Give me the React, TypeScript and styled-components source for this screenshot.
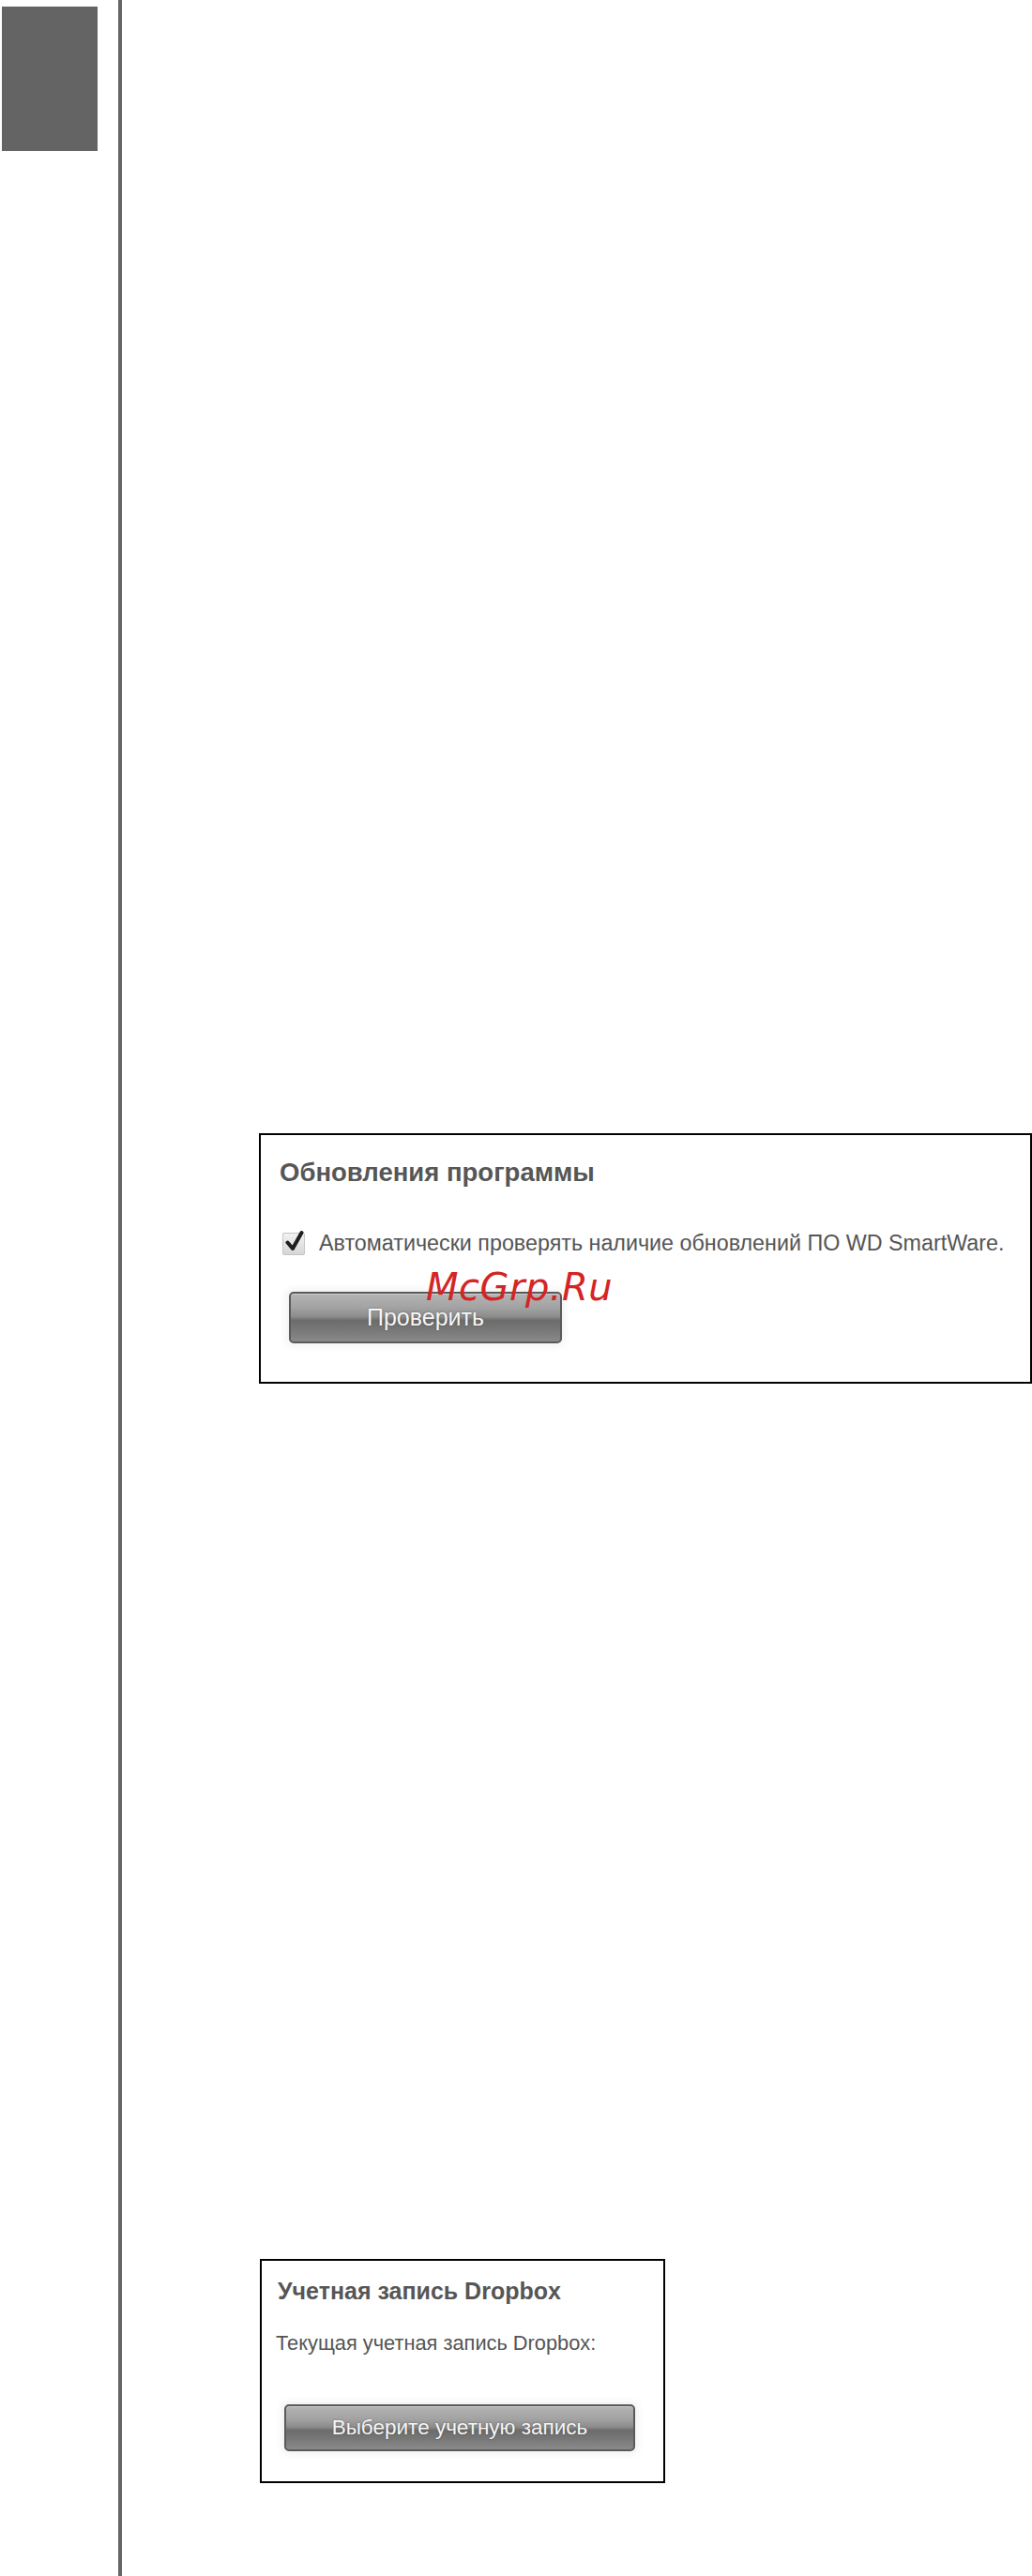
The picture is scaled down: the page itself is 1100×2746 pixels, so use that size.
import React from "react";
import styled, { createGlobalStyle } from "styled-components";

const GlobalStyle = createGlobalStyle`
  html, body {
    margin: 0;
    padding: 0;
    background: #ffffff;
  }
  body {
    font-family: "Liberation Sans", Arial, sans-serif;
  }
`;

const Page = styled.div`
  display: flex;
  min-height: 2746px;
  width: 1100px;
`;

const Sidebar = styled.aside`
  width: 126px;
  flex-shrink: 0;
  box-sizing: border-box;
  padding: 7px 0 0 2px;
`;

const ChapterTab = styled.div`
  width: 102px;
  height: 154px;
  background: #646464;
`;

const Rule = styled.div`
  width: 4px;
  flex-shrink: 0;
  background: #666666;
`;

const Main = styled.main`
  flex: 1;
  display: flex;
  flex-direction: column;
  align-items: flex-start;
  padding-left: 146px;
`;

const Panel = styled.section<{ $width: number; $height: number; $top: number; $shift?: number }>`
  position: relative;
  box-sizing: border-box;
  width: ${(p) => p.$width}px;
  height: ${(p) => p.$height}px;
  margin-top: ${(p) => p.$top}px;
  margin-left: ${(p) => p.$shift ?? 0}px;
  border: 2px solid #000;
  background: #fff;
  display: flex;
  flex-direction: column;
  align-items: flex-start;
`;

const UpdatesBody = styled.div`
  display: flex;
  flex-direction: column;
  align-items: flex-start;
  padding: 26px 0 0 20px;
`;

const DropboxBody = styled.div`
  display: flex;
  flex-direction: column;
  align-items: flex-start;
  padding: 20px 0 0 17px;
`;

const Title = styled.h2<{ $size: number }>`
  margin: 0;
  font-size: ${(p) => p.$size}px;
  line-height: 1;
  font-weight: bold;
  color: #565656;
  white-space: nowrap;
`;

const CheckRow = styled.label`
  display: flex;
  align-items: center;
  gap: 15px;
  margin: 50px 0 0 3px;
`;

const CheckBox = styled.span`
  position: relative;
  width: 24px;
  height: 24px;
  box-sizing: border-box;
  border: 1px solid #c4c4c4;
  border-radius: 2px;
  background: linear-gradient(to bottom, #f2f2f2, #d6d6d6);
  flex-shrink: 0;
`;

const CheckMark = styled.svg`
  position: absolute;
  left: 2px;
  top: -4px;
`;

const Text = styled.span<{ $size: number }>`
  font-size: ${(p) => p.$size}px;
  line-height: 1;
  color: #555555;
  white-space: nowrap;
`;

const Note = styled.p`
  margin: 32px 0 0 -2px;
  font-size: 21.8px;
  line-height: 1;
  color: #555555;
  white-space: nowrap;
`;

const GrayButton = styled.button<{ $width: number; $height: number; $size: number; $top: number; $left: number }>`
  box-sizing: border-box;
  width: ${(p) => p.$width}px;
  height: ${(p) => p.$height}px;
  margin: ${(p) => p.$top}px 0 0 ${(p) => p.$left}px;
  padding: 0;
  border: 2px solid #5a5a5a;
  border-radius: 5px;
  background: linear-gradient(
    to bottom,
    #b4b4b4 0%,
    #a2a2a2 30%,
    #8c8c8c 48%,
    #6c6c6c 56%,
    #777777 75%,
    #8a8a8a 100%
  );
  box-shadow: 0 0 8px 3px rgba(0, 0, 0, 0.06), inset 0 1px 0 rgba(255, 255, 255, 0.35);
  color: #f6f6f6;
  font-family: "Liberation Sans", Arial, sans-serif;
  font-size: ${(p) => p.$size}px;
  line-height: 1;
  text-shadow: 0 0 2px rgba(0, 0, 0, 0.35);
  cursor: pointer;
`;

const Watermark = styled.span`
  position: absolute;
  left: 176px;
  top: 142px;
  font-family: "DejaVu Sans", Verdana, sans-serif;
  font-style: oblique;
  font-size: 40px;
  line-height: 1;
  color: #d42424;
  letter-spacing: 0.5px;
  pointer-events: none;
`;

export default function App() {
  return (
    <>
      <GlobalStyle />
      <Page>
        <Sidebar>
          <ChapterTab />
        </Sidebar>
        <Rule />
        <Main>
          <Panel $width={824} $height={267} $top={1208}>
            <UpdatesBody>
              <Title $size={27.5}>Обновления программы</Title>
              <CheckRow>
                <CheckBox>
                  <CheckMark width="20" height="24" viewBox="0 0 20 24">
                    <path
                      d="M2.5 13.5 L8 20 L17.5 3"
                      fill="none"
                      stroke="#1e1e1e"
                      strokeWidth="4"
                      strokeLinecap="round"
                      strokeLinejoin="round"
                    />
                  </CheckMark>
                </CheckBox>
                <Text $size={23.3}>Автоматически проверять наличие обновлений ПО WD SmartWare.</Text>
              </CheckRow>
              <GrayButton $width={291} $height={55} $size={25} $top={39} $left={10}>
                Проверить
              </GrayButton>
            </UpdatesBody>
            <Watermark>McGrp.Ru</Watermark>
          </Panel>
          <Panel $width={432} $height={239} $top={933} $shift={1}>
            <DropboxBody>
              <Title $size={25}>Учетная запись Dropbox</Title>
              <Note>Текущая учетная запись Dropbox:</Note>
              <GrayButton $width={374} $height={50} $size={22.5} $top={54} $left={7}>
                Выберите учетную запись
              </GrayButton>
            </DropboxBody>
          </Panel>
        </Main>
      </Page>
    </>
  );
}
